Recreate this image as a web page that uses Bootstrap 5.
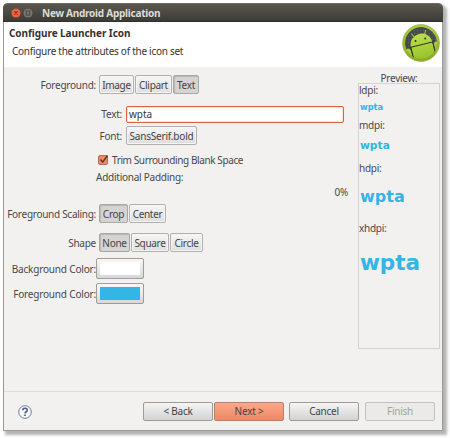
<!DOCTYPE html>
<html lang="en">
<head>
<meta charset="utf-8">
<title>New Android Application</title>
<link href="https://cdn.jsdelivr.net/npm/bootstrap@5.3.0/dist/css/bootstrap.min.css" rel="stylesheet">
<style>
body{width:450px;height:438px;overflow:hidden;background:#fff;padding:3px;font:10px/14px "Noto Sans","Open Sans",sans-serif;color:#484848;letter-spacing:-.25px}
.window{width:440px;height:428px;background:#f2f1f0;border:1px solid #999;border-top:0;border-radius:5px 5px 0 0;box-shadow:3px 3px 3px 1px #b4b4b4}
.titlebar{height:19px;margin:0 -1px;padding-left:8px;background:linear-gradient(#59574f,#3c3b37);border-top:1px solid #6d6a62;border-bottom:1px solid #302f2b;border-radius:5px 5px 0 0;color:#dfdbd2}
.titlebar svg{margin-right:2px}
.window-title{margin-left:7px;letter-spacing:-.25px}
.banner{height:45px;background:#fff;padding:4px 2px 0 5px;color:#333}
.banner h1{font:bold 10px/14px "Noto Sans",sans-serif;margin:0 0 4px;letter-spacing:-.06px}
.banner p{margin:0 0 0 3px;letter-spacing:-.27px}
.content-area{height:325px;border-bottom:1px solid #dfdddb}
.form-side{width:354px;padding-top:8px}
.line{height:19px}
.entry-line{height:18px;margin-top:11px;margin-bottom:3px}
.lbl{width:92px;text-align:right;white-space:nowrap;margin-right:3px;flex:none}
.lbl-inner{width:118px}
.tool{height:19px;padding:0;border:1px solid #b2b0ae;border-radius:2px;background:linear-gradient(#f6f6f6,#dedede);box-shadow:inset 0 0 0 1px #f5f5f5;line-height:16px;letter-spacing:-.3px;color:#444;text-align:center;white-space:nowrap;margin-right:1px}
.tool.pressed{background:#d5d4d3;border-color:#aaa8a6;box-shadow:inset 1px 1px 1px #b7b6b5;line-height:18px}
.w26{width:26px}.w29{width:29px}.w31{width:31px}.w33{width:33px}.w35{width:35px}.w37{width:37px}.w38{width:37px}.w71{width:71px;letter-spacing:-.2px}
.w39{width:38px}
.entry{width:218px;height:17px;padding:0 2px;border:1px solid #d9663c;border-radius:2px;background:#fff;box-shadow:inset 0 0 0 1px #fbe4da;line-height:15px;color:#333}
.trim-line{height:14px;margin:8px 0 0 94px}
.trim-line span{margin-left:3px;letter-spacing:-.39px}
.pad-label{margin:3px 0 0 92px;letter-spacing:-.25px}
.percent{margin-right:10px;margin-top:1px}
.scaling{margin-top:5px}
.scaling .lbl{letter-spacing:-.28px}
.shape-line{margin-top:10px;margin-bottom:6px}
.color-line{height:21px;margin-bottom:4px}
.color-line .lbl{letter-spacing:-.18px}
.swatch{width:48px;height:21px;padding:3px;margin-left:-3px;border:1px solid #9f9d9b;border-radius:2px;background:linear-gradient(#f8f8f8,#d8d8d8)}
.swatch span{display:block;height:13px;background:#fff}
.swatch .sky{background:#33b5e5}
.preview{width:82px;margin-top:4px}
.preview-title{height:12px;line-height:14px}
.preview-box{height:266px;border:1px solid #d5d3d1}
.preview-box b{display:block;font-family:"DejaVu Sans",sans-serif;color:#33b5e5;padding-left:1px;letter-spacing:0}
.preview-box span{display:block;height:13px;line-height:12px}
.p1{font-size:8.3px;line-height:20px;height:22px}
.p2{font-size:10.7px;line-height:28px;height:30px}
.p3{font-size:16px;line-height:43px;height:47px}
.p4{font-size:21.5px;line-height:55px}
.actions{height:38px;padding:1px 7px 0 14px}
.action{width:70px;height:19px;padding:0;border:1px solid #9d9b99;border-radius:2px;line-height:17px;color:#444;background:linear-gradient(#f5f5f5,#d2d2d2);letter-spacing:-.25px}
.action.primary{background:linear-gradient(#fba88a,#ef8861);border-color:#b58070}
.action:disabled{background:#ebeae9;border-color:#c3c1bf;color:#a5a3a1;opacity:1}
.action+.action{margin-left:6px}
.action+.primary{margin-left:1px}
.primary+.action{margin-left:5px}
</style>
<script src="https://cdn.jsdelivr.net/npm/bootstrap@5.3.0/dist/js/bootstrap.bundle.min.js"></script>
</head>
<body>
<main class="window">
  <header class="titlebar d-flex align-items-center fw-bold">
    <svg width="10" height="10" viewBox="0 0 10 10"><circle cx="5" cy="5" r="4.800" fill="#ed6540" stroke="#35332f" stroke-width=".4"/><path d="M3.400 3.400l3.200 3.200M6.600 3.400L3.400 6.600" stroke="#63301f" stroke-width="1.100"/></svg>
    <svg width="10" height="10" viewBox="0 0 10 10"><circle cx="5" cy="5" r="4.800" fill="#7b796f" stroke="#35332f" stroke-width=".4"/><rect x="3.200" y="3" width="3.600" height="4" fill="none" stroke="#484740"/></svg>
    <span class="window-title">New Android Application</span>
  </header>
  <section class="banner d-flex justify-content-between">
    <div><h1>Configure Launcher Icon</h1><p>Configure the attributes of the icon set</p></div>
    <svg class="flex-shrink-0 mt-n1" width="38" height="38" viewBox="0 0 38 38" overflow="visible">
      <defs><linearGradient id="rim" x2="0" y2="1"><stop stop-color="#a9cf43"/><stop offset="1" stop-color="#88ab20"/></linearGradient><linearGradient id="bot" x2="0" y2="1"><stop stop-color="#bade50"/><stop offset="1" stop-color="#94bd22"/></linearGradient>
      <clipPath id="disc"><circle cx="19" cy="19" r="16"/></clipPath></defs>
      <g transform="translate(0 -2)">
      <circle cx="19" cy="19" r="18.400" fill="url(#rim)" stroke="#91ad45" stroke-width=".7"/>
      <g clip-path="url(#disc)"><circle cx="19" cy="19" r="16" fill="#454747"/>
      <path d="M3 6.500h32M3 9.500h32M3 12.500h32M3 15.500h32M3 18.500h32M6.500 3v20M9.500 3v20M12.500 3v20M15.500 3v20M18.500 3v20M21.500 3v20M24.500 3v20M27.500 3v20M30.500 3v20M33.500 3v20" stroke="#606262" stroke-width=".4"/>
      <g transform="rotate(-14 20 20)"><path d="M8.500 20a11 10.500 0 0 1 22 0v20h-22zM2 24q0-3 2.500-3t3.200 3v14H2zm29.500 0q0-3 2.500-3t3 3v14h-5.500z" fill="url(#bot)"/><path d="M8.500 20.500h22M8.400 20v15M30.800 20v15" stroke="#353b20" stroke-width="1" fill="none"/><path d="M14 11l-1.800-3.500M25 11l1.800-3.500" stroke="#a5cf35" stroke-width="1"/><circle cx="14.500" cy="15.500" r="1" fill="#333"/><circle cx="24.500" cy="15.500" r="1" fill="#333"/></g></g></g>
    </svg>
  </section>
  <section class="content-area d-flex">
    <div class="form-side">
      <div class="line d-flex align-items-center"><span class="lbl">Foreground:</span><button class="tool w35">Image</button><button class="tool w38">Clipart</button><button class="tool pressed w26">Text</button></div>
      <div class="entry-line d-flex align-items-center"><label class="lbl lbl-inner me-1" for="label-text">Text:</label><input class="entry" id="label-text" value="wpta"></div>
      <div class="line d-flex align-items-center"><span class="lbl lbl-inner me-1">Font:</span><button class="tool w71">SansSerif.bold</button></div>
      <div class="d-flex align-items-center trim-line">
        <svg width="11" height="12" viewBox="0 0 11 12"><rect x=".5" y="1.500" width="9" height="9" rx="1.500" fill="#ee8a65" stroke="#b86b4d"/><path d="M2.500 5.500l2.200 2.700L9.500 1.500" fill="none" stroke="#51352b" stroke-width="1.400"/></svg>
        <span>Trim Surrounding Blank Space</span></div>
      <div class="pad-label">Additional Padding:</div>
      <div class="percent text-end">0%</div>
      <div class="line d-flex align-items-center scaling"><span class="lbl">Foreground Scaling:</span><button class="tool pressed w29">Crop</button><button class="tool w37">Center</button></div>
      <div class="line d-flex align-items-center shape-line"><span class="lbl">Shape</span><button class="tool pressed w31">None</button><button class="tool w39">Square</button><button class="tool w33">Circle</button></div>
      <div class="d-flex align-items-center color-line"><span class="lbl">Background Color:</span><button class="swatch" aria-label="Background Color"><span></span></button></div>
      <div class="d-flex align-items-center color-line"><span class="lbl">Foreground Color:</span><button class="swatch" aria-label="Foreground Color"><span class="sky"></span></button></div>
    </div>
    <aside class="preview">
      <div class="text-center preview-title">Preview:</div>
      <div class="preview-box"><span>ldpi:</span><b class="p1">wpta</b><span>mdpi:</span><b class="p2">wpta</b><span>hdpi:</span><b class="p3">wpta</b><span>xhdpi:</span><b class="p4">wpta</b></div>
    </aside>
  </section>
  <footer class="actions d-flex align-items-center">
    <svg width="14" height="14" viewBox="0 0 14 14"><circle cx="7" cy="7" r="6.300" fill="#f8f8fb" stroke="#6c7c9d"/><path d="M4.800 5.300C4.800 2.500 9.300 2.600 9.200 5.200 9.200 6.800 7 6.700 7 8.600" fill="none" stroke="#465b88" stroke-width="1.600"/><path d="M6.200 9.600h1.600v1.500H6.200z" fill="#465b88"/></svg>
    <div class="d-flex ms-auto"><button class="action">&lt; Back</button><button class="action primary">Next &gt;</button><button class="action">Cancel</button><button class="action" disabled>Finish</button></div>
  </footer>
</main>
</body>
</html>
